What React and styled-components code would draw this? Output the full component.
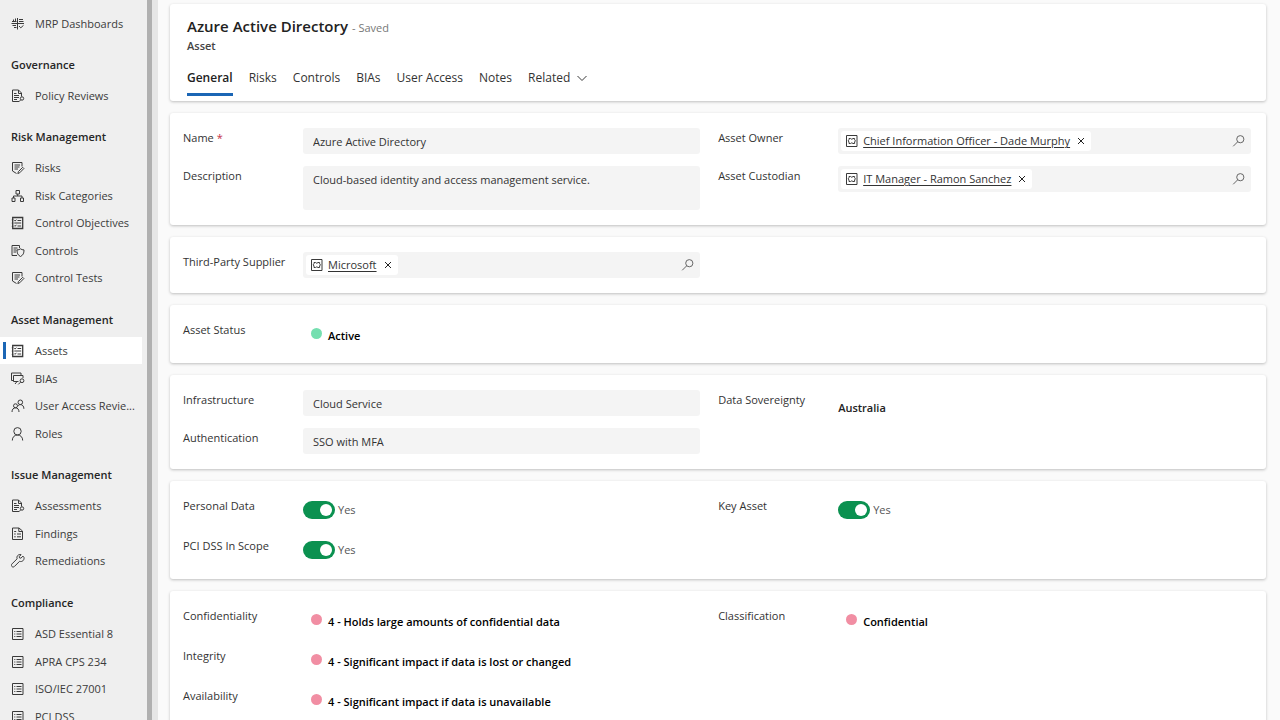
import React, { useState } from "react";
import styled, { createGlobalStyle } from "styled-components";

const GlobalStyle = createGlobalStyle`
  *, *::before, *::after { box-sizing: border-box; }
  body {
    margin: 0;
    background: #fafafa;
    color: #333;
    font-family: "Segoe UI", "Open Sans", "Noto Sans", sans-serif;
    font-size: 11px;
    line-height: 16px;
  }
  button, input, textarea { font: inherit; color: inherit; }
`;

const Shell = styled.div`
  display: flex;
  height: 100vh;
  overflow: hidden;
`;

const Sidebar = styled.nav`
  flex: none;
  width: 152px;
  padding: 10px 5px 0 0;
  background: #efefef;
  border-right: 5px solid #b0b0b0;
  overflow: hidden;
`;

const GroupTitle = styled.h2`
  margin: 0;
  padding: 20px 0 9px 11px;
  font-size: 11px;
  line-height: 16px;
  font-weight: 600;
  color: #262626;
`;

const NavList = styled.ul`
  margin: 0;
  padding: 0;
  list-style: none;
`;

const NavItem = styled.li`
  height: 28px;
  &:nth-child(even), &:only-child { height: 27px; }
`;

const NavLink = styled.a`
  position: relative;
  display: flex;
  align-items: center;
  gap: 10px;
  height: 27px;
  padding-left: 11px;
  color: #3b3b3b;
  text-decoration: none;
  white-space: nowrap;
  background: ${(p) => (p.$active ? "#fff" : "transparent")};

  &::before {
    content: "";
    display: ${(p) => (p.$active ? "block" : "none")};
    position: absolute;
    left: 3px;
    top: 5px;
    width: 3px;
    height: 17px;
    background: #1b66b5;
  }
`;

const Icon = styled.svg`
  flex: none;
  width: 14px;
  height: 14px;
  fill: none;
  stroke: ${(p) => p.$color || "#3a3a3a"};
  stroke-width: 1;
`;

const Main = styled.main`
  flex: 1;
  min-width: 0;
  display: flex;
  flex-direction: column;
  gap: 12px;
  padding: 4px 14px 12px 12px;
  background: #fafafa;
  border-left: 6px solid #e6e6e6;
  overflow: hidden;
`;

const Card = styled.section`
  flex: none;
  padding: 15px 15px 15px 13px;
  background: #fff;
  border-radius: 3px;
  box-shadow: 0 1px 3px rgba(0, 0, 0, 0.24);
`;

const HeaderCard = styled(Card).attrs({ as: "header" })`
  padding: 12px 17px 5px;
`;

const TitleRow = styled.div`
  display: flex;
  align-items: baseline;
  gap: 4px;
`;

const Title = styled.h1`
  margin: 0;
  font-size: 15px;
  line-height: 20px;
  font-weight: 600;
  color: #222;
`;

const Saved = styled.span`
  color: #777;
`;

const Subtitle = styled.p`
  margin: 2px 0 12px;
  font-weight: 600;
  color: #444;
`;

const Tabs = styled.div`
  display: flex;
  gap: 16px;
`;

const Tab = styled.button`
  display: flex;
  align-items: center;
  gap: 5px;
  padding: 4px 0 7px;
  border: 0;
  border-bottom: 3px solid ${(p) => (p.$active ? "#1b66b5" : "transparent")};
  background: none;
  font-size: 12px;
  line-height: 16px;
  font-weight: ${(p) => (p.$active ? 600 : 400)};
  color: ${(p) => (p.$active ? "#222" : "#333")};
`;

const Columns = styled.div`
  display: grid;
  grid-template-columns: minmax(0, 33fr) minmax(0, 34fr);
  column-gap: 18px;
`;

const Column = styled.div`
  display: flex;
  flex-direction: column;
  gap: 12px;
`;

const FieldRow = styled.div`
  display: grid;
  grid-template-columns: 120px minmax(0, 1fr);
  align-items: start;
`;

const Label = styled.label`
  padding-top: 2px;
`;

const Required = styled.span`
  color: #c4314b;
`;

const TextInput = styled.input`
  width: 100%;
  height: 26px;
  padding: 0 10px;
  border: 0;
  border-radius: 3px;
  background: #f4f4f4;
`;

const TextArea = styled.textarea`
  display: block;
  width: 100%;
  height: 44px;
  padding: 6px 10px;
  border: 0;
  border-radius: 3px;
  background: #f4f4f4;
  resize: none;
`;

const LookupBox = styled.div`
  display: flex;
  align-items: center;
  height: 26px;
  padding: 0 5px 0 3px;
  border-radius: 3px;
  background: #f4f4f4;
`;

const Chip = styled.span`
  display: flex;
  align-items: center;
  gap: 4px;
  height: 20px;
  padding: 0 3px 0 4px;
  border-radius: 3px;
  background: #fff;
`;

const ChipLink = styled.a`
  color: #333;
  text-decoration: underline;
  text-underline-offset: 2px;
  white-space: nowrap;
`;

const LookupInput = styled.input`
  flex: 1;
  min-width: 0;
  border: 0;
  background: none;
`;

const IconButton = styled.button`
  display: flex;
  padding: 0;
  border: 0;
  background: none;
`;

const StatusValue = styled.div`
  display: flex;
  gap: 6px;
  height: 28px;
  padding: 8px 0 0 8px;
  font-weight: 600;
  color: #000;
`;

const Dot = styled.span`
  width: 11px;
  height: 11px;
  border-radius: 50%;
  background: ${(p) => p.$color};
`;

const PlainValue = styled.div`
  padding-top: 10px;
  font-weight: 600;
  color: #222;
`;

const ToggleWrap = styled.div`
  display: flex;
  align-items: center;
  gap: 3px;
  height: 28px;
  color: #555;
`;

const Switch = styled.input`
  appearance: none;
  width: 32px;
  height: 18px;
  margin: 0;
  padding: 3px;
  border-radius: 9px;
  background: ${(p) => (p.checked ? "#0b9150" : "#999")};

  &::before {
    content: "";
    display: block;
    width: 12px;
    height: 12px;
    margin-left: ${(p) => (p.checked ? "14px" : "0")};
    border-radius: 50%;
    background: #fff;
  }
`;

const icons = {
  dashboard: (
    <>
      <path d="M.5 6.500H13M6.500 1v11.500" />
      <path d="M1 4.500h4.500M2.500 4.500V2.500M4.500 4.500V1.500M8 2.500h4M8 4.500h4.500" />
      <path d="M1.500 8.500h3.500M3 10.500h2.500M8 9l1.800 1.800L12.500 8.300" />
    </>
  ),
  review: (
    <>
      <path d="M8 12.500H1.500v-11.500H7.500l3 3v3.500M7.500 1v3.500H10.500" />
      <path d="M3 4.500h2.500M3 6.500h5M3 8.500h5M3 10.500h3" />
      <circle cx="11" cy="9.500" r="1.700" />
      <path d="M9.800 10.800l-2 2" />
    </>
  ),
  edit: (
    <>
      <path d="M5.500 12.500l-4-2.500V1.500h9.500v4M3.500 4h5.500M3.500 6h5M3.500 8h3.500" />
      <path d="M11.700 6.300l1.200 1.200-4.200 4.300-1.900.7.600-1.900z" />
    </>
  ),
  tree: (
    <>
      <path d="M5 1.500h3.500V5H5zM1 9h3v3.500H1zM9.500 9h3v3.500h-3z" />
      <path d="M6.700 5v2M2.500 9V7h8.500v2" />
    </>
  ),
  checklist: (
    <>
      <path strokeWidth="1.300" d="M1.700 1.500h10v11h-10z" />
      <path d="M3.300 4.300l.8.800L5.400 3.600M6.500 4.500h3.700M3.300 7h6.900M3.300 9.500l.8.800 1.300-1.500M6.500 10h3.700" />
      <path d="M.8 3.800h1.500M.8 7.100h1.500M.8 10.400h1.500" />
    </>
  ),
  shield: (
    <>
      <path d="M6 11.500H1v-10h7.500v2.500M2.500 4h4M2.500 6h3M2.500 8h2.500" />
      <path d="M9.500 4.800c1 .8 2 1.100 3.500 1.100 0 3.200-.7 5.200-3.500 6.600-2.800-1.400-3.500-3.400-3.500-6.600 1.500 0 2.500-.3 3.500-1.100z" />
    </>
  ),
  impact: (
    <>
      <path d="M2.500 8.500H.500v-7.500h9.500v2" />
      <path d="M7.500 9.500H2.500V3.500h9.500V6M4 12l2-2.500" />
      <circle cx="11" cy="8.700" r="1.900" />
      <path d="M9.600 10.100L7.300 12.400" />
    </>
  ),
  users: (
    <>
      <circle cx="4.500" cy="6.800" r="2" />
      <path d="M1 13c0-2.600 1.400-4.200 3.500-4.200S8 10.400 8 13" />
      <circle cx="9.300" cy="3.300" r="2.300" />
      <path d="M7 7.200c.5-1 1.300-1.600 2.300-1.600 2.200 0 3.600 1.600 3.600 4.200" />
    </>
  ),
  person: (
    <>
      <circle cx="6.500" cy="4.300" r="3.700" />
      <path d="M1.300 13.500c0-3.400 2.100-5.500 5.200-5.500s5.200 2.100 5.200 5.500" />
    </>
  ),
  findings: (
    <>
      <path d="M1.500 1h6.500l3.500 3v8.500h-10zM7.800 1v3.500h3.700" />
      <path d="M3.200 4.500h2M3.200 7h1.500M6 7h4M3.200 9.800h1.500M6 9.800h4" />
    </>
  ),
  wrench: (
    <path d="M12 2.100L9.900 4.200l-1.400-.3-.3-1.400 2-1.800C8.500.1 6.400 1 6 2.800c-.2.800-.1 1.400.1 2L1 9.900c-.8.800-.8 1.900-.1 2.600s1.800.7 2.600-.1l5.100-5.100c2.400 1 4.900-1.100 4.400-3.800z" />
  ),
  list: (
    <>
      <path d="M1.500 1.500h10.500v11H1.500z" />
      <path d="M3.300 4.500h1M5.500 4.500H10.500M3.300 7h1M5.500 7H10.500M3.300 9.500h1M5.500 9.500H10.500" />
    </>
  ),
  entity: (
    <>
      <path d="M1.500 1.500h10.500v11H1.500z" />
      <path d="M4 4.500h1.600l1.200.8 1.200-.8h1.600v1.300l.8 1-.8 1.200v1.500H8l-1.200-.7-1.200.7H4V8l-.8-1.200.8-1z" />
    </>
  ),
  search: (
    <>
      <circle cx="8.300" cy="5.200" r="3.600" />
      <path d="M5.700 7.800L1.200 12.300" />
    </>
  ),
  close: <path d="M4 4l6 6M10 4l-6 6" />,
  chevron: <path d="M2.500 5l4.500 4.500L11.500 5" />,
};

const Glyph = ({ name, color }) => (
  <Icon viewBox="0 0 14 14" aria-hidden="true" $color={color}>
    {icons[name]}
  </Icon>
);

const groups = [
  { items: [["MRP Dashboards", "dashboard"]] },
  { title: "Governance", items: [["Policy Reviews", "review"]] },
  {
    title: "Risk Management",
    items: [
      ["Risks", "edit"],
      ["Risk Categories", "tree"],
      ["Control Objectives", "checklist"],
      ["Controls", "shield"],
      ["Control Tests", "edit"],
    ],
  },
  {
    title: "Asset Management",
    items: [
      ["Assets", "checklist"],
      ["BIAs", "impact"],
      ["User Access Revie...", "users"],
      ["Roles", "person"],
    ],
  },
  {
    title: "Issue Management",
    items: [
      ["Assessments", "review"],
      ["Findings", "findings"],
      ["Remediations", "wrench"],
    ],
  },
  {
    title: "Compliance",
    items: [
      ["ASD Essential 8", "list"],
      ["APRA CPS 234", "list"],
      ["ISO/IEC 27001", "list"],
      ["PCI DSS", "list"],
    ],
  },
];

const tabs = ["General", "Risks", "Controls", "BIAs", "User Access", "Notes", "Related"];

const TextField = ({ id, label, value, required }) => (
  <FieldRow>
    <Label htmlFor={id}>
      {label} {required && <Required>*</Required>}
    </Label>
    <TextInput id={id} defaultValue={value} />
  </FieldRow>
);

const LookupField = ({ id, label, value }) => (
  <FieldRow>
    <Label htmlFor={id}>{label}</Label>
    <LookupBox>
      <Chip>
        <Glyph name="entity" />
        <ChipLink href="#">{value}</ChipLink>
        <IconButton type="button" aria-label={`Remove ${value}`}>
          <Glyph name="close" color="#222" />
        </IconButton>
      </Chip>
      <LookupInput id={id} />
      <IconButton type="button" aria-label={`Search ${label}`}>
        <Glyph name="search" color="#666" />
      </IconButton>
    </LookupBox>
  </FieldRow>
);

const StatusField = ({ label, value, color }) => (
  <FieldRow>
    <Label as="span">{label}</Label>
    <StatusValue>
      <Dot $color={color} />
      {value}
    </StatusValue>
  </FieldRow>
);

const ToggleField = ({ id, label }) => {
  const [on, setOn] = useState(true);
  return (
    <FieldRow>
      <Label htmlFor={id}>{label}</Label>
      <ToggleWrap>
        <Switch id={id} type="checkbox" role="switch" checked={on} onChange={() => setOn(!on)} />
        {on ? "Yes" : "No"}
      </ToggleWrap>
    </FieldRow>
  );
};

export default function App() {
  return (
    <Shell>
      <GlobalStyle />
      <Sidebar>
        {groups.map((group) => (
          <React.Fragment key={group.title || "top"}>
            {group.title && <GroupTitle>{group.title}</GroupTitle>}
            <NavList>
              {group.items.map(([label, icon]) => (
                <NavItem key={label}>
                  <NavLink href="#" $active={label === "Assets"}>
                    <Glyph name={icon} />
                    {label}
                  </NavLink>
                </NavItem>
              ))}
            </NavList>
          </React.Fragment>
        ))}
      </Sidebar>
      <Main>
        <HeaderCard>
          <TitleRow>
            <Title>Azure Active Directory</Title>
            <Saved>- Saved</Saved>
          </TitleRow>
          <Subtitle>Asset</Subtitle>
          <Tabs role="tablist">
            {tabs.map((tab) => (
              <Tab key={tab} type="button" role="tab" aria-selected={tab === "General"} $active={tab === "General"}>
                {tab}
                {tab === "Related" && <Glyph name="chevron" />}
              </Tab>
            ))}
          </Tabs>
        </HeaderCard>

        <Card>
          <Columns>
            <Column>
              <TextField id="name" label="Name" value="Azure Active Directory" required />
              <FieldRow>
                <Label htmlFor="description">Description</Label>
                <TextArea id="description" defaultValue="Cloud-based identity and access management service." />
              </FieldRow>
            </Column>
            <Column>
              <LookupField id="owner" label="Asset Owner" value="Chief Information Officer - Dade Murphy" />
              <LookupField id="custodian" label="Asset Custodian" value="IT Manager - Ramon Sanchez" />
            </Column>
          </Columns>
        </Card>

        <Card>
          <Columns>
            <LookupField id="supplier" label="Third-Party Supplier" value="Microsoft" />
          </Columns>
        </Card>

        <Card>
          <StatusField label="Asset Status" value="Active" color="#75dfb0" />
        </Card>

        <Card>
          <Columns>
            <Column>
              <TextField id="infrastructure" label="Infrastructure" value="Cloud Service" />
              <TextField id="authentication" label="Authentication" value="SSO with MFA" />
            </Column>
            <FieldRow>
              <Label as="span">Data Sovereignty</Label>
              <PlainValue>Australia</PlainValue>
            </FieldRow>
          </Columns>
        </Card>

        <Card>
          <Columns>
            <Column>
              <ToggleField id="personal-data" label="Personal Data" />
              <ToggleField id="pci-scope" label="PCI DSS In Scope" />
            </Column>
            <ToggleField id="key-asset" label="Key Asset" />
          </Columns>
        </Card>

        <Card>
          <Columns>
            <Column>
              <StatusField label="Confidentiality" value="4 - Holds large amounts of confidential data" color="#f18ea3" />
              <StatusField label="Integrity" value="4 - Significant impact if data is lost or changed" color="#f18ea3" />
              <StatusField label="Availability" value="4 - Significant impact if data is unavailable" color="#f18ea3" />
            </Column>
            <StatusField label="Classification" value="Confidential" color="#f18ea3" />
          </Columns>
        </Card>
      </Main>
    </Shell>
  );
}
